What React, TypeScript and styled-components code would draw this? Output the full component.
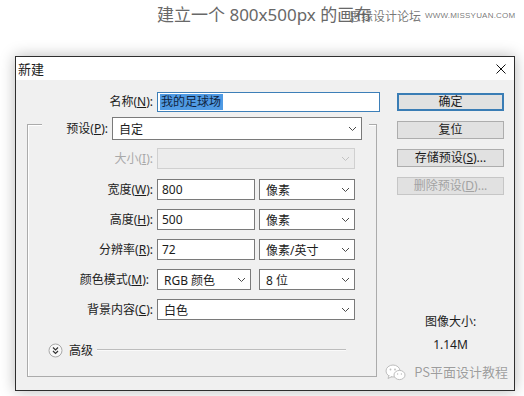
import styled, { createGlobalStyle } from 'styled-components';

const GlobalStyle = createGlobalStyle`
  html, body { margin: 0; padding: 0; background: #ffffff; }
  body { font-family: "Noto Sans", "Noto Sans CJK SC", sans-serif; }
`;

const Page = styled.div`
  position: relative;
  width: 524px;
  height: 396px;
  overflow: hidden;
  background: #ffffff;
`;

const Header = styled.div`
  position: relative;
  height: 56px;
  box-sizing: border-box;
  padding: 5px 0 0 157px;
`;

const Heading = styled.h1`
  margin: 0;
  font-size: 17px;
  line-height: 20px;
  font-weight: 400;
  color: #686868;
  white-space: nowrap;
`;

// site watermark printed over the heading
const SiteMark = styled.div`
  position: absolute;
  left: 349px;
  top: 9px;
  display: flex;
  align-items: center;
  gap: 4px;
  font-family: "Noto Sans CJK SC", sans-serif;
  font-size: 12px;
  line-height: 14px;
  color: rgba(95, 95, 95, 0.85);
  white-space: nowrap;
`;

const SiteUrl = styled.span`
  font-family: "Liberation Sans", sans-serif;
  font-size: 8px;
  letter-spacing: 0.2px;
`;

const Dialog = styled.div`
  margin-left: 15px;
  width: 500px;
  height: 335px;
  box-sizing: border-box;
  border: 1px solid #2e2e2e;
  background: #f0f0f0;
  display: flex;
  flex-direction: column;
  box-shadow: 0 0 14px rgba(0, 0, 0, 0.28);
  font-size: 12px;
  color: #1c1c1c;
`;

const TitleBar = styled.div`
  height: 23px;
  flex: none;
  background: #ffffff;
  display: flex;
  align-items: center;
  justify-content: space-between;
  padding: 0 8px 0 2px;
  font-size: 13px;
`;

const Body = styled.div`
  position: relative;
  flex: 1;
  display: flex;
`;

const LeftCol = styled.div`
  width: 364px;
  padding-top: 12px;
`;

const Row = styled.div<{ $top?: number; $gap?: number }>`
  display: flex;
  align-items: center;
  margin-top: ${(p) => p.$top ?? 0}px;
  gap: ${(p) => p.$gap ?? 4}px;
`;

const Label = styled.span<{ $w: number; $disabled?: boolean }>`
  width: ${(p) => p.$w}px;
  text-align: right;
  white-space: nowrap;
  line-height: 20px;
  color: ${(p) => (p.$disabled ? '#a9a9a9' : '#1c1c1c')};
`;

const Field = styled.div<{ $w: number; $h?: number; $disabled?: boolean; $focus?: boolean; $pad?: number }>`
  width: ${(p) => p.$w}px;
  height: ${(p) => p.$h ?? 21}px;
  box-sizing: border-box;
  border: 1px solid ${(p) => (p.$focus ? '#3d7fb8' : p.$disabled ? '#d0d0d0' : '#7a7a7a')};
  background: ${(p) => (p.$disabled ? '#ececec' : '#ffffff')};
  display: flex;
  align-items: center;
  justify-content: space-between;
  padding: 0 4px 0 ${(p) => p.$pad ?? 6}px;
  white-space: nowrap;
`;

const Selected = styled.span`
  background: #4f9ae3;
  color: #10243f;
  padding: 0 2px 0 1px;
  line-height: 16px;
`;

const GroupBox = styled.div`
  margin: 12px 0 0 11px;
  width: 350px;
  height: 253px;
  box-sizing: border-box;
  border: 1px solid #ababab;
  box-shadow: inset 1px 1px 0 #ffffff;
`;

const Legend = styled.div`
  display: flex;
  align-items: center;
  gap: 4px;
  margin: -8px 7px 0 14px;
  padding-right: 6px;
  background: #f0f0f0;
`;

const Advanced = styled.div`
  display: flex;
  align-items: center;
  margin: 21px 30px 0 20px;
`;

const AdvancedText = styled.span`
  margin: 0 4px 0 6px;
`;

const Rule = styled.div`
  flex: 1;
  border-top: 1px solid #bdbdbd;
  border-bottom: 1px solid #fafafa;
`;

const RightCol = styled.div`
  margin-left: 17px;
  width: 107px;
  padding-top: 13px;
  display: flex;
  flex-direction: column;
  gap: 10px;
`;

const Button = styled.button<{ $primary?: boolean }>`
  height: 18px;
  padding: 0;
  box-sizing: border-box;
  font: inherit;
  line-height: 14px;
  background: #e1e1e1;
  border: ${(p) => (p.$primary ? '2px solid #3a7db5' : '1px solid #adadad')};
  color: #1c1c1c;
  &:disabled {
    color: #a3a3a3;
    border-color: #c6c6c6;
  }
`;

const SizeInfo = styled.div`
  margin-top: 109px;
  text-align: center;
  line-height: 16px;
  display: flex;
  flex-direction: column;
  gap: 7px;
`;

// "PS平面设计教程" account watermark printed over the dialog corner
const Stamp = styled.div`
  position: absolute;
  right: 6px;
  bottom: 9px;
  display: flex;
  align-items: center;
  gap: 8px;
  font-family: "Noto Sans CJK SC", sans-serif;
  font-size: 13px;
  line-height: 18px;
  color: #9d9d9d;
  text-shadow: 0 0 1px #ffffff;
`;

function Chevron({ dim }: { dim?: boolean }) {
  return (
    <svg width="9" height="6" viewBox="0 0 9 6">
      <polyline points="1,1 4.5,4.5 8,1" fill="none" stroke={dim ? '#c2c2c2' : '#4a4a4a'} strokeWidth="1" />
    </svg>
  );
}

function Dropdown({ value, w, h, disabled }: { value?: string; w: number; h?: number; disabled?: boolean }) {
  return (
    <Field $w={w} $h={h} $disabled={disabled}>
      <span>{value}</span>
      <Chevron dim={disabled} />
    </Field>
  );
}

const sizeRows = [
  { label: '宽度', key: 'W', value: '800', unit: '像素' },
  { label: '高度', key: 'H', value: '500', unit: '像素' },
  { label: '分辨率', key: 'R', value: '72', unit: '像素/英寸' },
];

export default function App() {
  return (
    <Page>
      <GlobalStyle />
      <Header>
        <Heading>建立一个 800x500px 的画布</Heading>
        <SiteMark>
          思缘设计论坛
          <SiteUrl>WWW.MISSYUAN.COM</SiteUrl>
        </SiteMark>
      </Header>

      <Dialog>
        <TitleBar>
          <span>新建</span>
          <svg width="10" height="10" viewBox="0 0 10 10">
            <path d="M0.5 0.5 L9.5 9.5 M9.5 0.5 L0.5 9.5" stroke="#111" strokeWidth="1" />
          </svg>
        </TitleBar>

        <Body>
          <LeftCol>
            <Row>
              <Label $w={137}>名称(<u>N</u>):</Label>
              <Field $w={223} $h={20} $focus $pad={2}>
                <Selected>我的足球场</Selected>
              </Field>
            </Row>

            <GroupBox>
              <Legend>
                <Label $w={66}>预设(<u>P</u>):</Label>
                <Dropdown value="自定" w={250} h={23} />
              </Legend>

              <Row $top={8}>
                <Label $w={125} $disabled>大小(<u>I</u>):</Label>
                <Dropdown w={198} disabled />
              </Row>

              {sizeRows.map((r, i) => (
                <Row key={r.key} $top={i === 0 ? 10 : 9}>
                  <Label $w={125}>
                    {r.label}(<u>{r.key}</u>):
                  </Label>
                  <Field $w={98} $pad={4}>{r.value}</Field>
                  <Dropdown value={r.unit} w={96} />
                </Row>
              ))}

              <Row $top={9} $gap={8}>
                <Label $w={121}>颜色模式(<u>M</u>):</Label>
                <Dropdown value="RGB 颜色" w={94} />
                <Dropdown value="8 位" w={96} />
              </Row>

              <Row $top={9}>
                <Label $w={125}>背景内容(<u>C</u>):</Label>
                <Dropdown value="白色" w={198} />
              </Row>

              <Advanced>
                <svg width="15" height="15" viewBox="0 0 15 15">
                  <circle cx="7.5" cy="7.5" r="6.5" fill="#f8f8f8" stroke="#a8a8a8" />
                  <polyline points="5,4.5 7.5,7 10,4.5" fill="none" stroke="#333" strokeWidth="1.2" />
                  <polyline points="5,8 7.5,10.5 10,8" fill="none" stroke="#333" strokeWidth="1.2" />
                </svg>
                <AdvancedText>高级</AdvancedText>
                <Rule />
              </Advanced>
            </GroupBox>
          </LeftCol>

          <RightCol>
            <Button $primary>确定</Button>
            <Button>复位</Button>
            <Button>存储预设(<u>S</u>)...</Button>
            <Button disabled>删除预设(<u>D</u>)...</Button>
            <SizeInfo>
              <span>图像大小:</span>
              <span>1.14M</span>
            </SizeInfo>
          </RightCol>

          <Stamp>
            <svg width="21" height="17" viewBox="0 0 21 17">
              <ellipse cx="8" cy="7" rx="7" ry="6" fill="#ffffff" stroke="#bdbdbd" />
              <path d="M4 11.5 L3 14.5 L7 12.5" fill="#ffffff" stroke="#bdbdbd" />
              <ellipse cx="14.5" cy="11" rx="5.5" ry="4.6" fill="#ffffff" stroke="#bdbdbd" />
              <circle cx="5.5" cy="5.5" r="0.9" fill="#bdbdbd" />
              <circle cx="10" cy="5.5" r="0.9" fill="#bdbdbd" />
              <circle cx="12.6" cy="10" r="0.7" fill="#bdbdbd" />
              <circle cx="16.4" cy="10" r="0.7" fill="#bdbdbd" />
            </svg>
            PS平面设计教程
          </Stamp>
        </Body>
      </Dialog>
    </Page>
  );
}
